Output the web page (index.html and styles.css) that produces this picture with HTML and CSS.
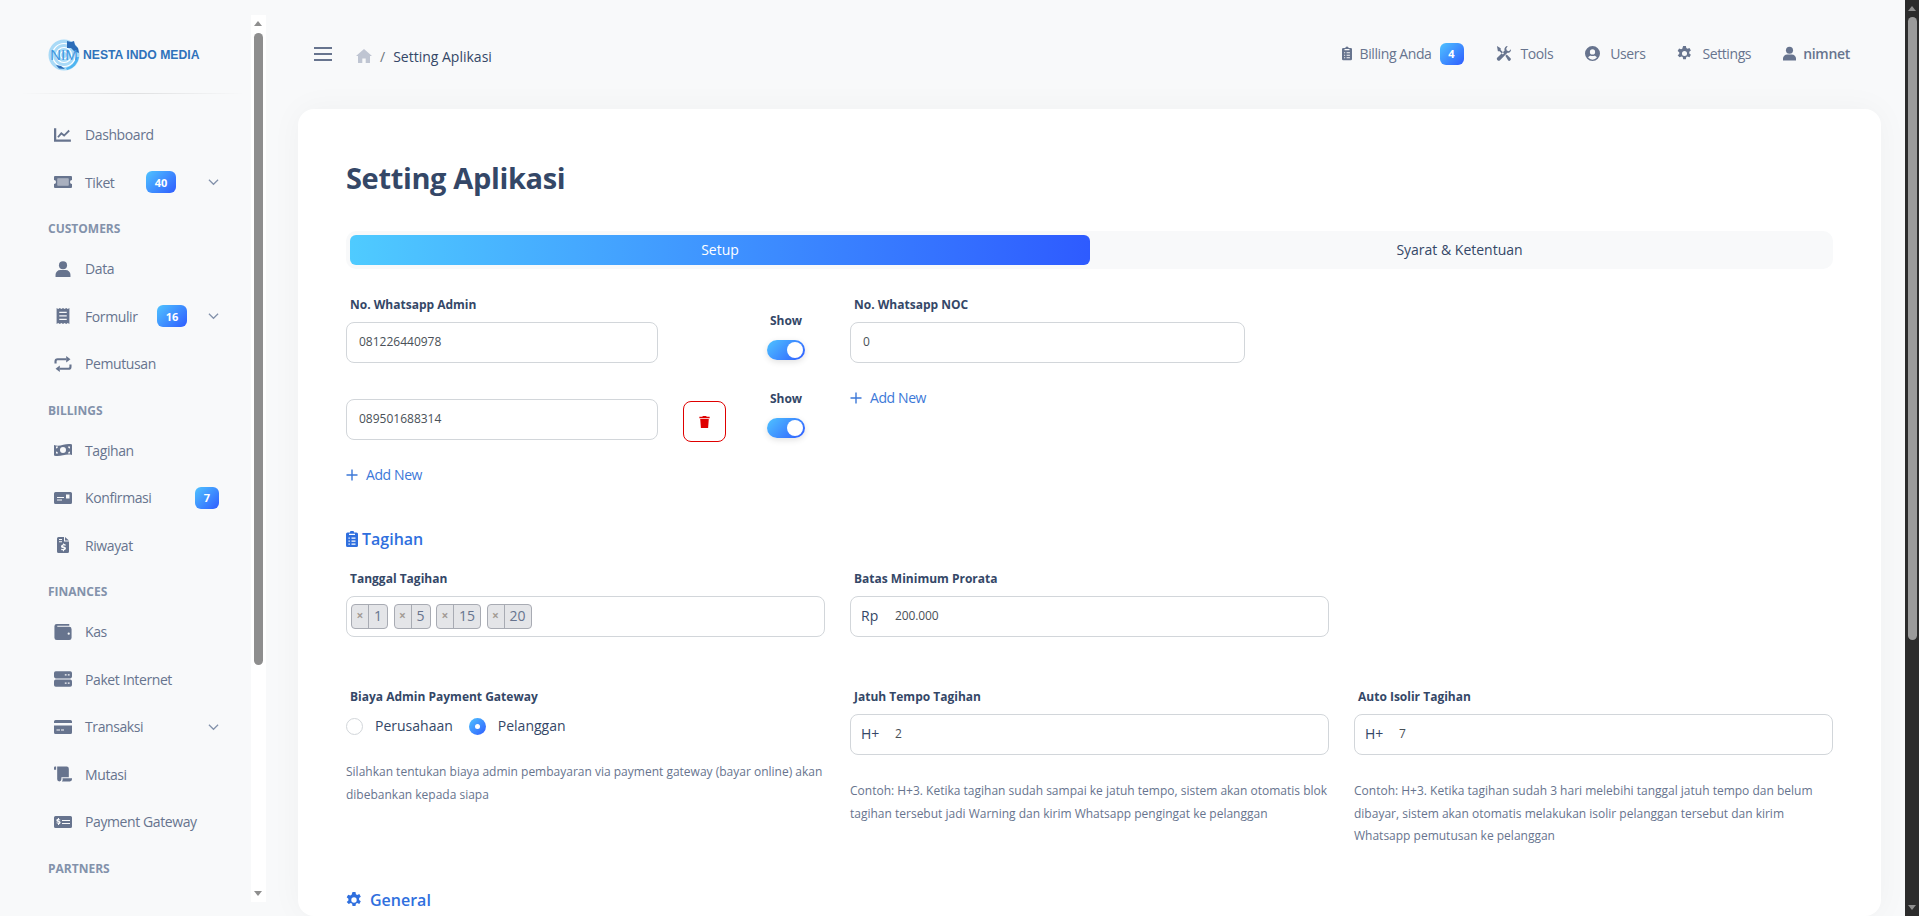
FILE: index.html
```html
<!DOCTYPE html>
<html lang="en">
    <head>
        <meta charset="UTF-8">
        <meta name="viewport" content="width=device-width, initial-scale=1.0">
        <link rel="stylesheet" href="styles.css">
        <title>Setting Aplikasi</title>
    </head>
    <body>
        <svg class="sprites" width="0" height="0">
            <symbol id="i-chart" viewBox="0 0 16 14"><path d="M1 1v11h14" fill="none" stroke="currentColor" stroke-width="2"/><path d="M3.5 9l3-3.5 2.5 2 4.5-4.5" fill="none" stroke="currentColor" stroke-width="1.6"/></symbol>
            <symbol id="i-ticket" viewBox="0 0 18 12"><path fill-rule="evenodd" d="M1 0h16a1 1 0 0 1 1 1v3a2 2 0 0 0 0 4v3a1 1 0 0 1-1 1H1a1 1 0 0 1-1-1V8a2 2 0 0 0 0-4V1a1 1 0 0 1 1-1zm2.500 2.500v7h11v-7z"/><rect x="3.5" y="2.5" width="11" height="7" opacity=".55"/></symbol>
            <symbol id="i-user" viewBox="0 0 14 15"><circle cx="7" cy="4" r="3.8"/><path d="M0 15v-2a4.500 4.500 0 0 1 4.500-4.500h5A4.500 4.500 0 0 1 14 13v2z"/></symbol>
            <symbol id="i-form" viewBox="0 0 12 15"><path fill-rule="evenodd" d="M0 0l1.500 1L3 0l1.500 1L6 0l1.500 1L9 0l1.500 1L12 0v15l-1.500-1-1.500 1-1.500-1L6 15l-1.500-1L3 15l-1.500-1L0 15zm2.500 3.500v1.300h7V3.500zm0 3.200V8h7V6.700zm0 3.300v1.300h7V10z"/></symbol>
            <symbol id="i-retweet" viewBox="0 0 16 15"><path d="M1 7V5a2 2 0 0 1 2-2h8" fill="none" stroke="currentColor" stroke-width="2"/><path d="M11 0l4 3-4 3z"/><path d="M15 8v2a2 2 0 0 1-2 2H5" fill="none" stroke="currentColor" stroke-width="2"/><path d="M5 9l-4 3 4 3z"/></symbol>
            <symbol id="i-money" viewBox="0 0 18 13"><path fill-rule="evenodd" d="M0 1.500C6 4 12-1 18 1v10.500C12 9.500 6 14 0 12zM9 3.500a3 3 0 1 0 0 6 3 3 0 0 0 0-6zM2 3v2a2 2 0 0 0 2-2zm14 5a2 2 0 0 0-2 2h2zM2 8v2h2a2 2 0 0 0-2-2zm12-5a2 2 0 0 0 2 2V3z"/></symbol>
            <symbol id="i-card-id" viewBox="0 0 18 12"><path fill-rule="evenodd" d="M1.500 0h15A1.500 1.500 0 0 1 18 1.500v9a1.500 1.500 0 0 1-1.500 1.500h-15A1.500 1.500 0 0 1 0 10.500v-9A1.500 1.500 0 0 1 1.500 0zm1.500 5v1h7V5zm0 2.500v1h5v-1zM12 2.500v4h3.500v-4z"/></symbol>
            <symbol id="i-invoice" viewBox="0 0 12 16"><path fill-rule="evenodd" d="M1.500 0H7v4.500h5v10a1.500 1.500 0 0 1-1.500 1.500h-9A1.500 1.500 0 0 1 0 14.500v-13A1.500 1.500 0 0 1 1.500 0zM8 0l4 3.500H8zM2 2v1h3V2zm0 2.200v1h3v-1zm4 2.300v1C4.800 7.700 4 8.400 4 9.400c0 2 3 1.300 3 2.300 0 .6-1.500.5-2.800 0v1.200c.5.200 1 .3 1.800.4v1h1v-1c1.200-.3 2-1 2-2 0-2.100-3-1.500-3-2.400 0-.5 1.200-.5 2.500 0V7.200A6 6 0 0 0 7 7V6.500z"/></symbol>
            <symbol id="i-wallet" viewBox="0 0 15 14"><path fill-rule="evenodd" d="M2 0h11v1.500H2.500v1H13A2 2 0 0 1 15 4.500V12a2 2 0 0 1-2 2H2a2 2 0 0 1-2-2V2a2 2 0 0 1 2-2zm10.500 7.500a1 1 0 1 0 0 2 1 1 0 0 0 0-2z"/></symbol>
            <symbol id="i-server" viewBox="0 0 15 13"><path fill-rule="evenodd" d="M1.500 0h12A1.500 1.500 0 0 1 15 1.500v3A1.500 1.500 0 0 1 13.500 6h-12A1.500 1.500 0 0 1 0 4.500v-3A1.500 1.500 0 0 1 1.500 0zM9 2.500v1h1.500v-1zm2.500 0v1H13v-1zM1.500 7h12A1.500 1.500 0 0 1 15 8.500v3a1.500 1.500 0 0 1-1.500 1.500h-12A1.500 1.500 0 0 1 0 11.500v-3A1.500 1.500 0 0 1 1.500 7zM9 9.500v1h1.500v-1zm2.500 0v1H13v-1z"/></symbol>
            <symbol id="i-credit" viewBox="0 0 18 14"><path fill-rule="evenodd" d="M1.500 0h15A1.500 1.500 0 0 1 18 1.500V3H0V1.500A1.500 1.500 0 0 1 1.500 0zM0 5.500h18v7a1.500 1.500 0 0 1-1.500 1.500h-15A1.500 1.500 0 0 1 0 12.500zm2.500 4v1H6v-1zm4.500 0v1h3v-1z"/></symbol>
            <symbol id="i-scroll" viewBox="0 0 17 14"><path d="M0 1a1 1 0 0 1 1-1h1v3H0zM3 0h9a2 2 0 0 1 2 2v8H7v2a2 2 0 0 1-2 2 2 2 0 0 1-2-2z"/><path d="M8 11h9v1a2 2 0 0 1-2 2H7.500a3 3 0 0 0 .5-3z"/></symbol>
            <symbol id="i-dollar" viewBox="0 0 18 12"><path fill-rule="evenodd" d="M1.500 0h15A1.500 1.500 0 0 1 18 1.500v9a1.500 1.500 0 0 1-1.500 1.500h-15A1.500 1.500 0 0 1 0 10.500v-9A1.500 1.500 0 0 1 1.500 0zM8 4v1h8V4zm0 3v1h8V7zM4 2v.8c-1 .2-1.600.8-1.600 1.600 0 1.700 2.400 1.200 2.400 1.900 0 .5-1 .5-2.200 0v1c.4.200.8.300 1.400.3V9h1v-.8c1-.2 1.600-.8 1.600-1.700 0-1.700-2.400-1.200-2.400-1.900 0-.4 1-.4 2 0v-1a4 4 0 0 0-1.200-.3V2z"/></symbol>
            <symbol id="i-clip" viewBox="0 0 12 16"><path fill-rule="evenodd" d="M4 1.500a2 2 0 0 1 4 0h2.500A1.500 1.500 0 0 1 12 3v11.500a1.500 1.500 0 0 1-1.500 1.500h-9A1.500 1.500 0 0 1 0 14.500V3a1.500 1.500 0 0 1 1.500-1.500zM3 4h6V2.700H3zM2.500 6.500v1.300h1.300V6.500zm3 0v1.300h4V6.500zm-3 3v1.300h1.300V9.500zm3 0v1.300h4V9.500zm-3 3v1.300h1.300v-1.300zm3 0v1.300h4v-1.300z"/></symbol>
            <symbol id="i-tools" viewBox="0 0 16 16"><path d="M1 0l4 2.500v1.800l3.500 3.500-1.200 1.200L3.800 5.500H2zM12.500 0a3.500 3.500 0 0 0-3.300 4.700L1 12.800A2.200 2.200 0 0 0 4 15.500l8.200-8.200A3.500 3.500 0 0 0 16 3.500l-2.300 2-2.200-.6-.6-2.200z"/><path d="M10 10.500l1.500-1.500 4 4a1.800 1.800 0 0 1-2.500 2.500z"/></symbol>
            <symbol id="i-circle-user" viewBox="0 0 16 16"><path fill-rule="evenodd" d="M8 0a8 8 0 1 1 0 16A8 8 0 0 1 8 0zm0 3.500a2.800 2.800 0 1 0 0 5.600 2.800 2.800 0 0 0 0-5.600zM3.300 12.300a6 6 0 0 0 9.400 0C12 11 10.800 10.300 10 10.300a6 6 0 0 1-4 0c-.8 0-2 .7-2.700 2z"/></symbol>
            <symbol id="i-gear" viewBox="0 0 16 16"><path fill-rule="evenodd" d="M6.500 0h3l.4 2.200 1.300.7 2.100-.8 1.500 2.600-1.700 1.400v1.800l1.700 1.400-1.500 2.600-2.100-.8-1.300.7-.4 2.200h-3l-.4-2.200-1.300-.7-2.100.8L.7 9.900l1.700-1.400V6.700L.7 5.300l1.500-2.600 2.100.8 1.300-.7zM8 5.300a2.700 2.700 0 1 0 0 5.400 2.700 2.700 0 0 0 0-5.400z"/></symbol>
            <symbol id="i-plus" viewBox="0 0 12 12"><path d="M6 .5v11M.5 6h11" fill="none" stroke="currentColor" stroke-width="1.400"/></symbol>
            <symbol id="i-chevron" viewBox="0 0 12 8"><path d="M1 1.500l5 5 5-5" fill="none" stroke="currentColor" stroke-width="1.300"/></symbol>
        </svg>

        <aside class="sidebar">
            <div class="brand">
                <svg class="brand-logo" viewBox="0 0 32 32">
                    <circle cx="16" cy="16" r="15.5" fill="#a9daf7"/>
                    <circle cx="16" cy="16" r="11.5" fill="none" stroke="#fff" stroke-width="1.2"/>
                    <circle cx="16" cy="16" r="7.5" fill="none" stroke="#fff" stroke-width="1.2"/>
                    <circle cx="16" cy="16" r="3.5" fill="none" stroke="#fff" stroke-width="1.2"/>
                    <path d="M19 2l4 1 3-1 1 4 3 3 1 5-5-2-3-3-4 0z" fill="#2b6cb8"/>
                    <path d="M8 26l5 1 4 3-6-.5z" fill="#2b6cb8"/>
                    <path d="M31 18a15.500 15.500 0 0 1-12 13l-1-2a13 13 0 0 0 10-11z" fill="#4fb5f0"/>
                </svg>
                <span class="brand-logo-text">NIM</span>
                <span class="brand-name">NESTA INDO MEDIA</span>
            </div>
            <hr class="brand-line">
            <nav class="menu">
                <a class="menu-item"><svg class="menu-icon"><use href="#i-chart"/></svg><span class="menu-text">Dashboard</span></a>
                <a class="menu-item"><svg class="menu-icon"><use href="#i-ticket"/></svg><span class="menu-text">Tiket</span><span class="badge badge-tiket">40</span><svg class="chevron"><use href="#i-chevron"/></svg></a>
                <h6 class="menu-label">CUSTOMERS</h6>
                <a class="menu-item"><svg class="menu-icon"><use href="#i-user"/></svg><span class="menu-text">Data</span></a>
                <a class="menu-item"><svg class="menu-icon"><use href="#i-form"/></svg><span class="menu-text">Formulir</span><span class="badge badge-formulir">16</span><svg class="chevron"><use href="#i-chevron"/></svg></a>
                <a class="menu-item"><svg class="menu-icon"><use href="#i-retweet"/></svg><span class="menu-text">Pemutusan</span></a>
                <h6 class="menu-label">BILLINGS</h6>
                <a class="menu-item"><svg class="menu-icon"><use href="#i-money"/></svg><span class="menu-text">Tagihan</span></a>
                <a class="menu-item"><svg class="menu-icon"><use href="#i-card-id"/></svg><span class="menu-text">Konfirmasi</span><span class="badge badge-end">7</span></a>
                <a class="menu-item"><svg class="menu-icon"><use href="#i-invoice"/></svg><span class="menu-text">Riwayat</span></a>
                <h6 class="menu-label">FINANCES</h6>
                <a class="menu-item"><svg class="menu-icon"><use href="#i-wallet"/></svg><span class="menu-text">Kas</span></a>
                <a class="menu-item"><svg class="menu-icon"><use href="#i-server"/></svg><span class="menu-text">Paket Internet</span></a>
                <a class="menu-item"><svg class="menu-icon"><use href="#i-credit"/></svg><span class="menu-text">Transaksi</span><svg class="chevron chevron-only"><use href="#i-chevron"/></svg></a>
                <a class="menu-item"><svg class="menu-icon"><use href="#i-scroll"/></svg><span class="menu-text">Mutasi</span></a>
                <a class="menu-item"><svg class="menu-icon"><use href="#i-dollar"/></svg><span class="menu-text">Payment Gateway</span></a>
                <h6 class="menu-label">PARTNERS</h6>
            </nav>
            <div class="side-scroll">
                <span class="arrow-up"></span>
                <span class="side-thumb"></span>
                <span class="arrow-down"></span>
            </div>
        </aside>

        <main class="main">
            <header class="topbar">
                <div class="burger"><span></span><span></span><span></span></div>
                <svg class="home" viewBox="0 0 16 14"><path d="M8 0l8 7h-2v7H9.700V9.500H6.300V14H2V7H0z"/></svg>
                <span class="crumb-sep">/</span>
                <span class="crumb">Setting Aplikasi</span>
                <nav class="topnav">
                    <a class="top-link"><svg class="top-icon icon-clip"><use href="#i-clip"/></svg>Billing Anda<span class="badge badge-top">4</span></a>
                    <a class="top-link"><svg class="top-icon"><use href="#i-tools"/></svg>Tools</a>
                    <a class="top-link"><svg class="top-icon"><use href="#i-circle-user"/></svg>Users</a>
                    <a class="top-link"><svg class="top-icon"><use href="#i-gear"/></svg>Settings</a>
                    <a class="top-link top-user"><svg class="top-icon"><use href="#i-user"/></svg>nimnet</a>
                </nav>
            </header>

            <section class="card">
                <h1 class="page-title">Setting Aplikasi</h1>
                <div class="tabs">
                    <div class="tab tab-active">Setup</div>
                    <div class="tab">Syarat &amp; Ketentuan</div>
                </div>

                <div class="wa-row">
                    <div class="wa-admin">
                        <label class="field-label">No. Whatsapp Admin</label>
                        <div class="wa-line">
                            <div class="input input-wa">081226440978</div>
                            <div class="trash-slot"></div>
                            <div class="show"><span class="show-label">Show</span><span class="switch"></span></div>
                        </div>
                        <div class="wa-line wa-line-second">
                            <div class="input input-wa">089501688314</div>
                            <div class="trash-slot">
                                <button class="trash"><svg viewBox="0 0 12 14"><path d="M4 0h4l.5 1H12v1.500H0V1h3.500zM1 3.500h10L10.200 14H1.800z"/></svg></button>
                            </div>
                            <div class="show show-second"><span class="show-label">Show</span><span class="switch"></span></div>
                        </div>
                        <a class="add-new add-admin"><svg><use href="#i-plus"/></svg>Add New</a>
                    </div>
                    <div class="wa-noc">
                        <label class="field-label">No. Whatsapp NOC</label>
                        <div class="input input-noc">0</div>
                        <a class="add-new"><svg><use href="#i-plus"/></svg>Add New</a>
                    </div>
                </div>

                <h3 class="section-title section-tagihan"><svg><use href="#i-clip"/></svg>Tagihan</h3>
                <div class="grid-row row-dates">
                    <div>
                        <label class="field-label">Tanggal Tagihan</label>
                        <div class="input input-tags">
                            <span class="tag"><i>×</i><b>1</b></span>
                            <span class="tag"><i>×</i><b>5</b></span>
                            <span class="tag"><i>×</i><b>15</b></span>
                            <span class="tag"><i>×</i><b>20</b></span>
                        </div>
                    </div>
                    <div>
                        <label class="field-label">Batas Minimum Prorata</label>
                        <div class="input input-prefix"><span class="prefix">Rp</span>200.000</div>
                    </div>
                    <div></div>
                </div>

                <div class="grid-row row-bills">
                    <div>
                        <label class="field-label">Biaya Admin Payment Gateway</label>
                        <div class="radios">
                            <span class="radio"></span><span class="radio-text">Perusahaan</span>
                            <span class="radio radio-on"></span><span class="radio-text">Pelanggan</span>
                        </div>
                        <p class="hint">Silahkan tentukan biaya admin pembayaran via payment gateway (bayar online) akan dibebankan kepada siapa</p>
                    </div>
                    <div>
                        <label class="field-label">Jatuh Tempo Tagihan</label>
                        <div class="input input-prefix"><span class="prefix">H+</span>2</div>
                        <p class="hint">Contoh: H+3. Ketika tagihan sudah sampai ke jatuh tempo, sistem akan otomatis blok tagihan tersebut jadi Warning dan kirim Whatsapp pengingat ke pelanggan</p>
                    </div>
                    <div>
                        <label class="field-label">Auto Isolir Tagihan</label>
                        <div class="input input-prefix"><span class="prefix">H+</span>7</div>
                        <p class="hint">Contoh: H+3. Ketika tagihan sudah 3 hari melebihi tanggal jatuh tempo dan belum dibayar, sistem akan otomatis melakukan isolir pelanggan tersebut dan kirim Whatsapp pemutusan ke pelanggan</p>
                    </div>
                </div>

                <h3 class="section-title section-general"><svg><use href="#i-gear"/></svg>General</h3>
            </section>
        </main>

        <div class="page-scroll">
            <span class="arrow-up"></span>
            <span class="page-thumb"></span>
            <span class="arrow-down"></span>
        </div>
    </body>
</html>
```

FILE: styles.css
```css
* {
    box-sizing: border-box;
}

body {
    margin: 0;
    height: 916px;
    overflow: hidden;
    display: flex;
    font-family: 'Open Sans', 'Liberation Sans', sans-serif;
    background: #f8f9fa;
    color: #67748e;
    position: relative;
}

.sprites {
    position: absolute;
}

svg {
    fill: currentColor;
}

/* sidebar */
.sidebar {
    width: 298px;
    flex-shrink: 0;
    position: relative;
    padding-left: 48px;
}

.brand {
    height: 93px;
    padding-top: 39px;
    display: flex;
    align-items: flex-start;
    position: relative;
}

.brand-logo {
    width: 32px;
    height: 32px;
}

.brand-logo-text {
    position: absolute;
    left: 0;
    top: 46px;
    width: 32px;
    text-align: center;
    font-family: 'Liberation Sans', sans-serif;
    font-size: 15px;
    color: #3f97e0;
}

.brand-name {
    margin-left: 3px;
    margin-top: 9px;
    font-family: 'Liberation Sans', sans-serif;
    font-size: 12.2px;
    font-weight: 700;
    line-height: 14px;
    color: #2f72bb;
    white-space: nowrap;
}

.brand-line {
    position: absolute;
    left: 20px;
    top: 93px;
    width: 225px;
    height: 1px;
    margin: 0;
    border: 0;
    background: linear-gradient(90deg, rgba(0, 0, 0, 0), rgba(0, 0, 0, 0.1), rgba(0, 0, 0, 0));
}

.menu {
    width: 172px;
    padding-top: 18px;
}

.menu-item {
    height: 47.5px;
    display: flex;
    align-items: center;
    font-size: 14px;
    letter-spacing: -0.4px;
    color: #67748e;
}

.menu-icon {
    width: 18px;
    height: 16px;
    margin-left: 6px;
    margin-right: 13px;
    flex-shrink: 0;
}

.menu-text {
    white-space: nowrap;
}

.menu-label {
    margin: 0;
    height: 39px;
    padding-top: 7px;
    line-height: 32px;
    font-size: 12px;
    font-weight: 700;
    color: #8392ab;
}

.badge {
    display: inline-flex;
    align-items: center;
    justify-content: center;
    height: 22px;
    border-radius: 6px;
    color: #fff;
    font-size: 11px;
    font-weight: 700;
    letter-spacing: 0;
    background: linear-gradient(135deg, #4fc3ff, #2f5cff);
}

.badge-tiket {
    width: 30px;
    margin-left: auto;
    margin-right: 32px;
}

.badge-formulir {
    width: 30px;
    margin-left: auto;
    margin-right: 21px;
}

.badge-end {
    width: 24px;
    margin-left: auto;
    margin-right: 1px;
}

.badge-top {
    width: 24px;
    margin-left: 8px;
}

.chevron {
    width: 11px;
    height: 8px;
    margin-right: 1px;
    color: #8392ab;
}

.chevron-only {
    margin-left: auto;
}

.side-scroll {
    position: absolute;
    left: 251px;
    top: 15px;
    width: 15px;
    height: 887px;
    background: #fff;
}

.side-thumb {
    position: absolute;
    left: 3px;
    top: 18px;
    width: 9px;
    height: 632px;
    border-radius: 5px;
    background: #8e8e8e;
}

.arrow-up, .arrow-down {
    position: absolute;
    left: 3px;
    width: 0;
    height: 0;
    border-left: 4.5px solid transparent;
    border-right: 4.5px solid transparent;
}

.arrow-up {
    top: 6px;
    border-bottom: 5px solid #8e8e8e;
}

.arrow-down {
    bottom: 6px;
    border-top: 5px solid #8e8e8e;
}

/* main */
.main {
    flex: 1;
    min-width: 0;
    padding-right: 38px;
}

.topbar {
    height: 109px;
    display: flex;
    align-items: center;
}

.burger {
    width: 18px;
    margin-left: 16px;
    margin-top: -2px;
    display: flex;
    flex-direction: column;
    gap: 4px;
}

.burger span {
    height: 2px;
    background: #67748e;
}

.home {
    width: 16px;
    height: 14px;
    margin-left: 24px;
    margin-top: 3px;
    color: #bfc5d2;
}

.crumb-sep {
    margin-left: 8px;
    margin-top: 3px;
    font-size: 14px;
    color: #6c757d;
}

.crumb {
    margin-left: 8px;
    margin-top: 3px;
    font-size: 14px;
    color: #344767;
}

.topnav {
    margin-left: auto;
    margin-top: -2px;
    padding-right: 31px;
    display: flex;
    align-items: center;
    gap: 32px;
}

.top-link {
    display: flex;
    align-items: center;
    font-size: 14px;
    letter-spacing: -0.4px;
    color: #67748e;
}

.top-icon {
    width: 15px;
    height: 15px;
    margin-right: 10px;
}

.top-icon.icon-clip {
    width: 10px;
    margin-right: 8px;
}

.top-user {
    font-weight: 600;
    letter-spacing: -0.3px;
}

.top-user .top-icon {
    width: 13px;
    margin-right: 7px;
}

.card {
    background: #fff;
    border-radius: 16px;
    height: 807px;
    padding: 48px 48px 0;
    box-shadow: 0 0 32px rgba(0, 0, 0, 0.04);
}

.page-title {
    margin: 0;
    height: 42px;
    font-size: 29px;
    font-weight: 700;
    line-height: 42px;
    letter-spacing: -0.35px;
    color: #344767;
}

.tabs {
    margin-top: 32px;
    height: 38px;
    padding: 4px;
    display: grid;
    grid-template-columns: 740px 1fr;
    background: #f8f9fa;
    border-radius: 10px;
}

.tab {
    height: 30px;
    padding-bottom: 2px;
    display: flex;
    align-items: center;
    justify-content: center;
    font-size: 14px;
    color: #344767;
    border-radius: 6px;
}

.tab-active {
    color: #fff;
    background: linear-gradient(90deg, #4fcbff, #2e5bff);
}

/* form */
.field-label {
    display: block;
    padding-left: 4px;
    font-size: 12px;
    font-weight: 700;
    line-height: 18px;
    color: #344767;
}

.input {
    height: 41px;
    padding: 0 12px 2px;
    display: flex;
    align-items: center;
    font-size: 12px;
    color: #495057;
    border: 1px solid #d2d6da;
    border-radius: 8px;
    background: #fff;
}

.wa-row {
    display: flex;
    margin-top: 27px;
    height: 204px;
}

.wa-admin {
    width: 504px;
}

.wa-line {
    display: flex;
    margin-top: 8px;
}

.wa-line-second {
    margin-top: 36px;
}

.input-wa {
    width: 312px;
}

.trash-slot {
    width: 43px;
    margin-left: 25px;
}

.trash {
    width: 43px;
    height: 41px;
    margin-top: 2px;
    padding: 0;
    display: flex;
    align-items: center;
    justify-content: center;
    border: 1px solid #df0000;
    border-radius: 8px;
    background: #fff;
    color: #df0000;
}

.trash svg {
    width: 11px;
    height: 12px;
}

.show {
    width: 48px;
    margin-left: 36px;
    margin-top: -10px;
    display: flex;
    flex-direction: column;
    align-items: center;
}

.show-second {
    margin-top: -9px;
}

.show-label {
    font-size: 12px;
    font-weight: 700;
    line-height: 18px;
    color: #344767;
}

.switch {
    width: 38px;
    height: 20px;
    margin-top: 10px;
    border-radius: 10px;
    background: linear-gradient(135deg, #4fc3ff, #2f5cff);
    box-shadow: 0 2px 6px rgba(0, 0, 0, 0.12);
    position: relative;
}

.switch::after {
    content: "";
    position: absolute;
    right: 2px;
    top: 2px;
    width: 16px;
    height: 16px;
    border-radius: 50%;
    background: #fff;
}

.wa-noc {
    width: 395px;
}

.input-noc {
    margin-top: 8px;
}

.add-new {
    display: flex;
    align-items: center;
    margin-top: 25px;
    font-size: 14px;
    letter-spacing: -0.4px;
    color: #3c78d8;
}

.add-admin {
    margin-top: 23px;
}

.add-new svg {
    width: 12px;
    height: 12px;
    margin-right: 8px;
}

.section-title {
    margin: 0;
    display: flex;
    align-items: center;
    font-size: 16px;
    font-weight: 600;
    line-height: 22px;
    color: #2f6fde;
}

.section-tagihan {
    margin-top: 28px;
}

.section-tagihan svg {
    width: 12px;
    height: 16px;
    margin-right: 4px;
}

.section-general {
    margin-top: 41px;
}

.section-general svg {
    width: 16px;
    height: 16px;
    margin-right: 8px;
}

.grid-row {
    display: grid;
    grid-template-columns: repeat(3, 479px);
    column-gap: 25px;
}

.row-dates {
    margin-top: 20px;
    height: 118px;
}

.row-dates .input, .row-bills .input {
    margin-top: 8px;
}

.input-tags {
    padding: 0 4px;
    gap: 5.5px;
}

.tag {
    height: 25px;
    margin-top: -1px;
    display: flex;
    font-size: 14px;
    color: #67748e;
    background: #e4e5e8;
    border: 1px solid #a8abb3;
    border-radius: 4px;
}

.tag i {
    width: 17px;
    font-style: normal;
    font-weight: 700;
    font-size: 12px;
    line-height: 22px;
    text-align: center;
    color: #a39c96;
    border-right: 1px solid #a8abb3;
}

.tag b {
    padding: 0 5px;
    font-weight: 400;
    line-height: 22px;
}

.input-prefix {
    padding-left: 10px;
    letter-spacing: -0.1px;
}

.prefix {
    width: 34px;
    font-size: 14px;
    letter-spacing: 0;
    color: #344767;
    flex-shrink: 0;
}

.radios {
    display: flex;
    align-items: center;
    margin-top: 8px;
    margin-bottom: 1px;
    height: 22px;
    font-size: 14px;
    color: #344767;
}

.radio {
    width: 17px;
    height: 17px;
    margin-right: 12px;
    margin-top: 2px;
    border-radius: 50%;
    border: 1px solid #d2d6da;
}

.radio-text + .radio {
    margin-left: 16px;
}

.radio-on {
    border: 0;
    background: linear-gradient(135deg, #4fc3ff, #2f5cff);
    position: relative;
}

.radio-on::after {
    content: "";
    position: absolute;
    left: 6px;
    top: 6px;
    width: 5px;
    height: 5px;
    border-radius: 50%;
    background: #fff;
}

.hint {
    margin: 25px 0 0;
    font-size: 12px;
    line-height: 22.5px;
    color: #67748e;
}

/* page scrollbar */
.page-scroll {
    position: absolute;
    right: 0;
    top: 0;
    width: 14px;
    height: 916px;
    background: #2c2c2c;
}

.page-scroll .arrow-up, .page-scroll .arrow-down {
    left: 3px;
}

.page-thumb {
    position: absolute;
    left: 3px;
    top: 17px;
    width: 9px;
    height: 623px;
    border-radius: 5px;
    background: #9b9b9b;
}
```
